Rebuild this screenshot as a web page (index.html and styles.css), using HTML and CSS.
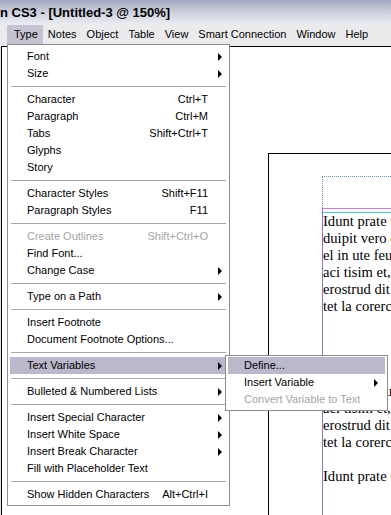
FILE: index.html
```html
<!DOCTYPE html>
<html>
<head>
    <meta charset="utf-8">
    <title>Untitled-3 @ 150%</title>
    <link rel="stylesheet" href="styles.css">
</head>
<body>
<div class="app">
    <div class="titlebar">n CS3 - [Untitled-3 @ 150%]</div>

    <div class="menubar">
        <span class="mb-item active">Type</span>
        <span class="mb-item">Notes</span>
        <span class="mb-item">Object</span>
        <span class="mb-item">Table</span>
        <span class="mb-item">View</span>
        <span class="mb-item">Smart Connection</span>
        <span class="mb-item">Window</span>
        <span class="mb-item">Help</span>
    </div>

    <!-- document window with the page -->
    <div class="workspace">
        <div class="page">
            <div class="slug"></div>
            <div class="frame">
                <div class="baseline"></div>
                <div class="para">
                    <div>Idunt prate tat ut alit</div>
                    <div>duipit vero odolor sum</div>
                    <div>el in ute feugiat lore</div>
                    <div>aci tisim et, quat nim</div>
                    <div>erostrud dit lorem il</div>
                    <div>tet la corercin hent</div>
                </div>
                <div class="para">
                    <div>&nbsp;</div>
                    <div>&nbsp;</div>
                    <div>&nbsp;</div>
                    <div>el in ute feugiat lore</div>
                    <div>aci tisim et, quat nim</div>
                    <div>erostrud dit lorem il</div>
                    <div>tet la corercin hent</div>
                </div>
                <div class="para">
                    <div>Idunt prate tat ut alit</div>
                </div>
            </div>
        </div>
    </div>

    <!-- open Type menu -->
    <div class="menu">
        <div class="item"><span>Font</span><i class="arrow"></i></div>
        <div class="item"><span>Size</span><i class="arrow"></i></div>
        <div class="sep"></div>
        <div class="item"><span>Character</span><span class="key">Ctrl+T</span></div>
        <div class="item"><span>Paragraph</span><span class="key">Ctrl+M</span></div>
        <div class="item"><span>Tabs</span><span class="key">Shift+Ctrl+T</span></div>
        <div class="item"><span>Glyphs</span></div>
        <div class="item"><span>Story</span></div>
        <div class="sep"></div>
        <div class="item"><span>Character Styles</span><span class="key">Shift+F11</span></div>
        <div class="item"><span>Paragraph Styles</span><span class="key">F11</span></div>
        <div class="sep"></div>
        <div class="item off"><span>Create Outlines</span><span class="key">Shift+Ctrl+O</span></div>
        <div class="item"><span>Find Font...</span></div>
        <div class="item"><span>Change Case</span><i class="arrow"></i></div>
        <div class="sep"></div>
        <div class="item"><span>Type on a Path</span><i class="arrow"></i></div>
        <div class="sep"></div>
        <div class="item"><span>Insert Footnote</span></div>
        <div class="item"><span>Document Footnote Options...</span></div>
        <div class="sep"></div>
        <div class="item hl"><span>Text Variables</span><i class="arrow"></i>
            <div class="submenu">
                <div class="item hl"><span>Define...</span></div>
                <div class="item"><span>Insert Variable</span><i class="arrow"></i></div>
                <div class="item off"><span>Convert Variable to Text</span></div>
            </div>
        </div>
        <div class="sep"></div>
        <div class="item"><span>Bulleted &amp; Numbered Lists</span><i class="arrow"></i></div>
        <div class="sep"></div>
        <div class="item"><span>Insert Special Character</span><i class="arrow"></i></div>
        <div class="item"><span>Insert White Space</span><i class="arrow"></i></div>
        <div class="item"><span>Insert Break Character</span><i class="arrow"></i></div>
        <div class="item"><span>Fill with Placeholder Text</span></div>
        <div class="sep"></div>
        <div class="item"><span>Show Hidden Characters</span><span class="key">Alt+Ctrl+I</span></div>
    </div>
</div>
</body>
</html>
```

FILE: styles.css
```css
html, body {
    margin: 0;
    padding: 0;
}

body {
    width: 391px;
    height: 515px;
    overflow: hidden;
    font-family: "Liberation Sans", Arial, sans-serif;
    font-size: 11px;
    color: #000;
}

.app {
    position: relative;
    display: flex;
    flex-direction: column;
    height: 515px;
    background: #e4e4e8;
}

.titlebar {
    height: 24px;
    line-height: 25px;
    font-size: 13px;
    font-weight: bold;
    white-space: nowrap;
    background: linear-gradient(#9ea5bd, #c9cdd9 45%, #e9ebf0);
}

.menubar {
    display: flex;
    height: 22px;
    box-sizing: border-box;
    padding: 1px 0 0 7px;
    background: #ebebee;
    white-space: nowrap;
}

.mb-item {
    height: 19px;
    line-height: 19px;
    padding: 0 5px;
}

.mb-item.active {
    padding-left: 7px;
    background: #c3c3d2;
}

/* document window */
.workspace {
    flex: 1;
    margin-left: 1px;
    border-left: 1px solid #000;
    border-top: 1px solid #000;
    background: #fff;
    overflow: hidden;
}

.page {
    margin: 106px 0 0 266px;
    padding-left: 53px;
    height: 420px;
    border-top: 1px solid #000;
    border-left: 1px solid #000;
}

.slug {
    margin-top: 22px;
    height: 31px;
    border-top: 1px dotted #6f95a8;
    border-left: 1px dotted #6f95a8;
}

.frame {
    height: 360px;
    border-top: 1px solid #c97fd6;
    border-left: 1px solid #8a74cc;
    font-family: "Liberation Serif", "Times New Roman", serif;
    font-size: 14.6px;
    line-height: 17px;
    white-space: nowrap;
    overflow: hidden;
}

.baseline {
    margin-top: 3px;
    border-top: 1px solid #4cc3cc;
}

.para {
    margin-bottom: 17px;
}

.para:first-of-type {
    margin-top: 20px;
}

/* menus */
.menu {
    position: absolute;
    left: 7px;
    top: 44px;
    width: 223px;
    box-sizing: border-box;
    padding: 3px 2px 2px;
    border: 1px solid #8d8d8d;
    background: #fff;
}

.item {
    position: relative;
    display: flex;
    height: 17px;
    line-height: 17px;
    padding: 0 19px 0 17px;
    white-space: nowrap;
}

.item.hl {
    background: #b9b9cb;
}

.item.off {
    color: #a5a5a5;
}

.key {
    margin-left: auto;
}

.arrow {
    position: absolute;
    right: 5px;
    top: 5px;
    width: 0;
    height: 0;
    border-left: 4px solid #000;
    border-top: 4px solid transparent;
    border-bottom: 4px solid transparent;
}

.sep {
    margin: 4px 1px;
    border-top: 1px solid #a8a8a8;
}

.submenu {
    position: absolute;
    left: calc(100% - 2px);
    top: -2px;
    width: 163px;
    box-sizing: border-box;
    padding: 1px 2px 2px;
    border: 1px solid #8d8d8d;
    background: #fff;
}

.submenu .item {
    padding-left: 16px;
}

.submenu .arrow {
    right: 7px;
}
```
